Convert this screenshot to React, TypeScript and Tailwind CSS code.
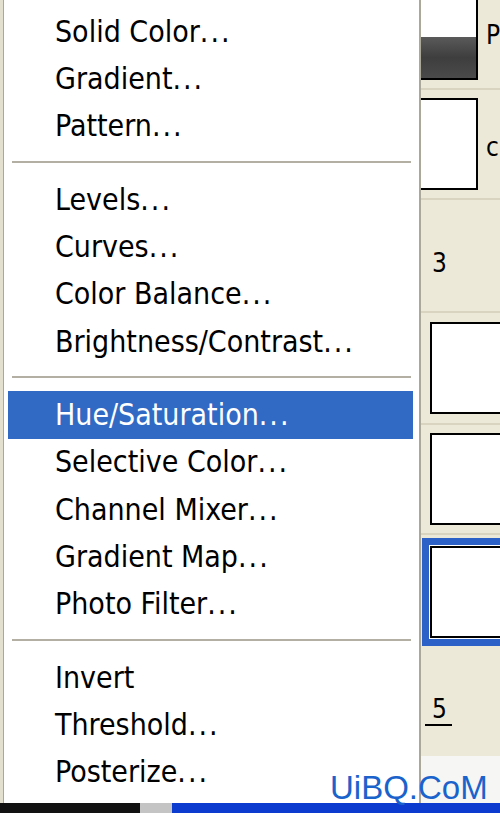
import React from 'react';

type Entry = { label: string; active?: boolean } | 'sep';

const entries: Entry[] = [
    { label: 'Solid Color...' },
    { label: 'Gradient...' },
    { label: 'Pattern...' },
    'sep',
    { label: 'Levels...' },
    { label: 'Curves...' },
    { label: 'Color Balance...' },
    { label: 'Brightness/Contrast...' },
    'sep',
    { label: 'Hue/Saturation...', active: true },
    { label: 'Selective Color...' },
    { label: 'Channel Mixer...' },
    { label: 'Gradient Map...' },
    { label: 'Photo Filter...' },
    'sep',
    { label: 'Invert' },
    { label: 'Threshold...' },
    { label: 'Posterize...' },
];

// the old bitmap font puts its dots further apart
const MenuLabel: React.FC<{ text: string }> = ({ text }) => {
    if (!text.endsWith('...')) return <>{text}</>;
    return (
        <>
            {text.slice(0, -3)}
            <span className="tracking-[2px]">...</span>
        </>
    );
};

const App: React.FC = () => {
    return (
        <div className="relative w-[500px] h-[813px] overflow-hidden bg-[#ece9d8] flex flex-col font-['DejaVu_Sans_Condensed','DejaVu_Sans',sans-serif] [font-stretch:condensed]">
            <div className="flex flex-1 min-h-0">
                {/* left edge of window */}
                <div className="w-[3px] bg-[#e4e0d0]" />

                {/* adjustment menu */}
                <div className="w-[420px] bg-white border-l border-r-2 border-[#aca899] pt-[8px] pl-[4px] pr-[6px]">
                    {entries.map((entry, i) =>
                        entry === 'sep' ? (
                            <div key={i} className="h-[26px] pt-[11px] pl-[4px] pr-[2px]">
                                <div className="h-[2px] bg-[#b3b0a3]" />
                            </div>
                        ) : (
                            <div
                                key={i}
                                className={`h-[47.33px] flex items-center pl-[47px] text-[30px] leading-none ${
                                    entry.active ? 'bg-[#316ac5] text-white' : 'text-black'
                                }`}
                            >
                                <MenuLabel text={entry.label} />
                            </div>
                        )
                    )}
                </div>

                {/* layers panel behind the menu */}
                <div className="flex-1 flex flex-col text-[26px] leading-none text-black">
                    <div className="h-[90px] flex border-b-2 border-[#d9d4bf]">
                        <div className="w-[57px] h-[80px] border-r-2 border-b-2 border-black flex flex-col">
                            <div className="h-[37px] bg-white" />
                            <div className="flex-1 bg-gradient-to-b from-[#5a5a5a] via-[#3e3e3e] to-[#4a4a4a]" />
                        </div>
                        <div className="pl-[8px] pt-[22px]">P</div>
                    </div>
                    <div className="h-[110px] flex pt-[8px] border-b-2 border-[#d9d4bf]">
                        <div className="w-[57px] h-[92px] border-t-2 border-r-2 border-b-2 border-black bg-white" />
                        <div className="pl-[8px] pt-[36px]">c</div>
                    </div>
                    <div className="h-[113px] pl-[11px] pt-[50px] border-b-2 border-[#d9d4bf]">3</div>
                    <div className="h-[112px] pl-[9px] pt-[9px] border-b-2 border-[#d9d4bf]">
                        <div className="h-[92px] border-l-2 border-t-2 border-b-2 border-black bg-white" />
                    </div>
                    <div className="h-[110px] pl-[9px] pt-[8px] border-b-2 border-[#d9d4bf]">
                        <div className="h-[92px] border-l-2 border-t-2 border-b-2 border-black bg-white" />
                    </div>
                    <div className="h-[113px] pl-[1px] pt-[3px]">
                        <div className="h-[108px] border-l-[7px] border-t-[7px] border-b-[7px] border-[#2c62c8] pl-[1px] pt-[1px] pb-[1px] bg-white">
                            <div className="h-full border-l-2 border-t-2 border-b-2 border-black bg-white" />
                        </div>
                    </div>
                    <div className="h-[108px] pl-[4px] pt-[48px]">
                        <span className="border-b-2 border-black pl-[7px] pr-[5px]">5</span>
                    </div>
                    <div className="flex-1 bg-[#f6f6f4]" />
                </div>
            </div>

            {/* taskbar strip */}
            <div className="h-[10px] flex">
                <div className="w-[140px] bg-[#111111]" />
                <div className="w-[32px] bg-[#c4c4c4]" />
                <div className="flex-1 bg-[#0b3ccf]" />
            </div>

            {/* watermark */}
            <div className="absolute left-[330px] top-[771px] text-[33px] leading-none text-[#1a63cc] font-['Liberation_Sans',sans-serif] [font-stretch:normal]">
                UiBQ.CoM
            </div>
        </div>
    );
};

export default App;
